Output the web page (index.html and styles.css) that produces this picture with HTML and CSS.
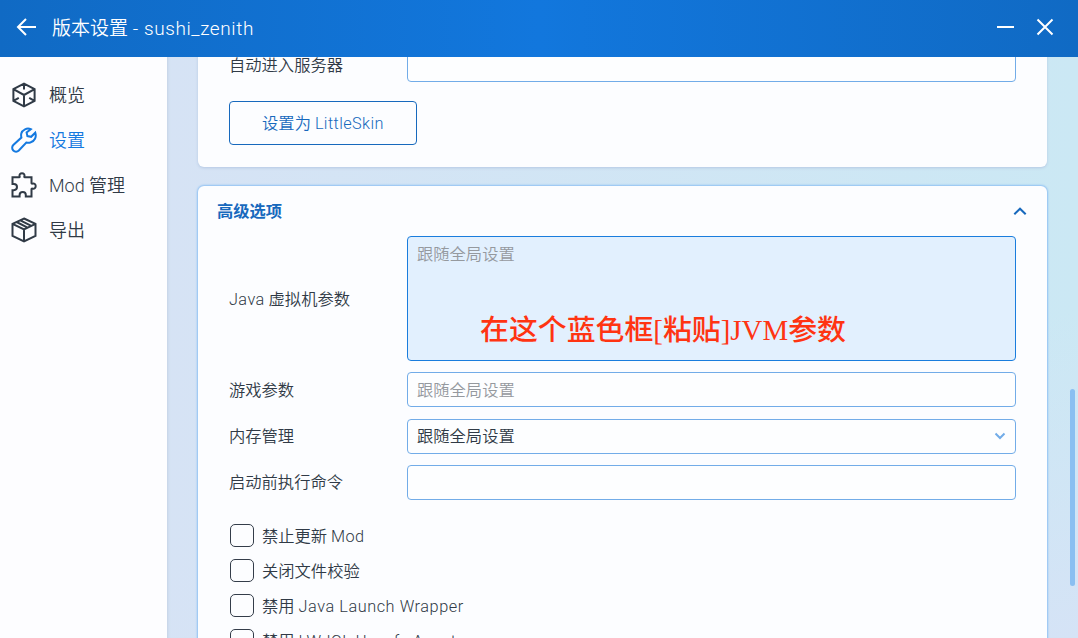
FILE: index.html
```html
<!DOCTYPE html>
<html lang="zh-CN">
<head>
  <meta charset="UTF-8" />
  <meta name="viewport" content="width=device-width, initial-scale=1.0"/>
  <title>版本设置 - sushi_zenith</title>
  <link rel="stylesheet" href="styles.css">
</head>
<body>
  <header class="titlebar">
    <svg class="back" width="22" height="20" viewBox="0 0 22 20"><path d="M20 10H2M10 2L2 10l8 8"/></svg>
    <h1>版本设置 <span class="en">- sushi_zenith</span></h1>
    <svg class="min" width="20" height="20" viewBox="0 0 20 20"><path d="M2 10h17"/></svg>
    <svg class="close" width="20" height="20" viewBox="0 0 20 20"><path d="M2.500 2.500l15 15M17.500 2.500l-15 15"/></svg>
  </header>

  <div class="main">
    <nav class="sidebar">
      <a class="nav-item">
        <svg width="26" height="26" viewBox="0 0 26 26"><path d="M13 1.600L23.600 7.200v11.600L13 24.400 2.400 18.800V7.200zM13 1.600v6M2.400 7.200L13 13l10.600-5.800M13 13v11.400M2.400 18.800l5.400-3M23.600 18.800l-5.400-3"/></svg>
        <span>概览</span>
      </a>
      <a class="nav-item active">
        <svg width="26" height="26" viewBox="0 0 26 26"><path d="M19.800 2.200C16 .6 11.300 2.600 10.300 6.600c-.4 1.600-.2 2.800.1 4L2.300 18c-1.500 1.500-1.500 4 0 5.500s4 1.500 5.500 0l7.500-8c1.300.3 2.600.4 4 0 4.400-1 6.400-5.600 5-9.800l-4.200 4.100-3.700-.7-.8-3.600z"/></svg>
        <span>设置</span>
      </a>
      <a class="nav-item">
        <svg width="26" height="26" viewBox="0 0 26 26"><path d="M1.500 5.300h6.700c.6 0 .6-.5.4-1.100C8 2.500 9.300 1.300 11 1.300s3 1.200 2.400 2.900c-.2.600-.2 1.100.4 1.100h6.700V11c0 .7.500.8 1.100.6 1.700-.5 3.100.7 3.100 2.500s-1.400 3-3.100 2.500c-.6-.2-1.100-.1-1.100.6v7.300h-5.700v-1.600c0-1.800-1.300-3-3-3s-3.200 1.200-3.200 3v1.600H1.500v-6.300h1.300c1.800 0 3.200-1.300 3.200-3.100s-1.400-3.200-3.200-3.200H1.500z"/></svg>
        <span><span class="en">Mod</span> 管理</span>
      </a>
      <a class="nav-item">
        <svg width="26" height="26" viewBox="0 0 26 26"><path d="M13 1.500l11.500 5.300v12.100L13 24.500 1.500 18.900V6.800zM1.500 6.800L13 12.300l11.500-5.500M13 12.300v12.200M9.300 3.300l10.500 5.300M5.600 5l10.500 5.300"/></svg>
        <span>导出</span>
      </a>
    </nav>

    <main class="content">
      <section class="card card-server">
        <div class="row">
          <label>自动进入服务器</label>
          <div class="field"></div>
        </div>
        <button class="btn">设置为 <span class="en">LittleSkin</span></button>
      </section>

      <section class="card card-advanced">
        <div class="card-head">
          <h2>高级选项</h2>
          <svg width="14" height="9" viewBox="0 0 14 9"><path d="M1.300 7.300L7 1.700l5.700 5.600"/></svg>
        </div>
        <div class="rows">
          <div class="row">
            <label><span class="en">Java</span> 虚拟机参数</label>
            <div class="field area">
              <span class="hint">跟随全局设置</span>
              <strong class="note">在这个蓝色框[粘贴]JVM参数</strong>
            </div>
          </div>
          <div class="row">
            <label>游戏参数</label>
            <div class="field"><span class="hint">跟随全局设置</span></div>
          </div>
          <div class="row">
            <label>内存管理</label>
            <div class="field select">
              <span>跟随全局设置</span>
              <svg width="12" height="8" viewBox="0 0 12 8"><path d="M1.500 1.500L6 6l4.500-4.500"/></svg>
            </div>
          </div>
          <div class="row">
            <label>启动前执行命令</label>
            <div class="field"></div>
          </div>
        </div>
        <div class="checks">
          <label class="check"><i></i><span>禁止更新 <span class="en">Mod</span></span></label>
          <label class="check"><i></i><span>关闭文件校验</span></label>
          <label class="check"><i></i><span>禁用 <span class="en wide">Java Launch Wrapper</span></span></label>
          <label class="check"><i></i><span>禁用 <span class="en">LWJGL Unsafe Agent</span></span></label>
        </div>
      </section>

      <div class="scrollbar"></div>
    </main>
  </div>
</body>
</html>
```
FILE: styles.css
```css
* {
  box-sizing: border-box;
}

body {
  margin: 0;
  height: 638px;
  overflow: hidden;
  display: flex;
  flex-direction: column;
  font-family: Roboto, "Noto Sans CJK SC", sans-serif;
  font-size: 16.3px;
  font-weight: 350;
  color: #303a46;
}

svg {
  fill: none;
  stroke: currentColor;
  stroke-width: 2;
  flex: none;
}

.en {
  font-weight: 300;
  letter-spacing: 0.4px;
}

.wide {
  letter-spacing: 0.55px;
}

/* Title bar */
.titlebar {
  height: 57px;
  flex: none;
  display: flex;
  align-items: center;
  padding: 0 23px 3px 16px;
  background: linear-gradient(90deg, #106ac4, #1277dd 50%, #106ac4);
  color: #fff;
}

.titlebar h1 {
  flex: 1;
  margin: 3px 0 0 14px;
  font-size: 19px;
  font-weight: 350;
  line-height: 24px;
}

.titlebar .en {
  letter-spacing: 0.6px;
}

.titlebar .min {
  margin-right: 20px;
}

.main {
  flex: 1;
  min-height: 0;
  display: flex;
}

/* Sidebar */
.sidebar {
  width: 167px;
  flex: none;
  padding: 15px 0 0 11px;
  background: #fdfdff;
}

.nav-item {
  height: 45px;
  display: flex;
  align-items: center;
  gap: 12px;
  font-size: 18px;
}

.nav-item span {
  padding-bottom: 1.500px;
}

.nav-item .en {
  letter-spacing: 0;
}

.nav-item.active {
  color: #1479e0;
}

/* Content */
.content {
  position: relative;
  flex: 1;
  overflow: hidden;
  padding: 0 31px;
  background: linear-gradient(165deg, transparent 60%, #d5e3f6), linear-gradient(90deg, #d6e3f5, #cbe8f4);
  box-shadow: inset 3px 0 3px -2px #c3d1e4;
}

.card {
  background: #fcfdff;
  border-radius: 6px;
}

.card-server {
  height: 130px;
  margin-top: -20px;
  padding: 10px 31px 0;
  box-shadow: 0 1px 3px #b5c8e3;
}

.card-advanced {
  height: 500px;
  margin-top: 19px;
  padding: 0 31px;
  box-shadow: 0 0 2px 1px #8fc1f3;
}

.row {
  display: grid;
  grid-template-columns: 178px 1fr;
  align-items: center;
}

.row label {
  padding-bottom: 2px;
}

.field {
  height: 35px;
  display: flex;
  align-items: center;
  padding: 0 9px;
  border: 1px solid #72ace8;
  border-radius: 4px;
  background: #fdfeff;
}

.field span {
  padding-bottom: 2px;
}

.hint {
  color: #95999e;
}

.btn {
  width: 188px;
  height: 44px;
  margin-top: 19px;
  padding: 0 0 2px;
  border: 1px solid #1769bd;
  border-radius: 4px;
  background: none;
  color: #1769bd;
  font: inherit;
}

.card-head {
  height: 50px;
  margin: 0 -11px 0 -12px;
  display: flex;
  align-items: center;
  justify-content: space-between;
  color: #1769bd;
}

.card-head h2 {
  margin: 0;
  padding-bottom: 2px;
  font-size: 16.3px;
  font-weight: 700;
}

.rows {
  display: flex;
  flex-direction: column;
  gap: 11.300px;
}

.area {
  height: 125px;
  flex-direction: column;
  align-items: flex-start;
  padding-top: 4px;
  border-color: #1a7ddd;
  background: #e2f0fe;
}

/* Red reminder inside the JVM box */
.note {
  margin: 42px 0 0 63px;
  font-family: "Liberation Serif", "Noto Sans CJK SC", serif;
  font-size: 28.900px;
  font-weight: 500;
  line-height: 42px;
  white-space: nowrap;
  color: #ff3412;
}

.select {
  justify-content: space-between;
}

.select svg {
  color: #72ace8;
}

.checks {
  margin: 18px 0 0 1px;
}

.check {
  height: 35px;
  display: flex;
  align-items: center;
  gap: 8px;
}

.check i {
  width: 24px;
  height: 23px;
  border: 1.500px solid #343d4a;
  border-radius: 5px;
}

.check > span {
  padding-bottom: 1px;
}

.scrollbar {
  position: absolute;
  top: 332px;
  right: 3px;
  width: 5px;
  height: 197px;
  border-radius: 3px;
  background: #8abff1;
}
```
